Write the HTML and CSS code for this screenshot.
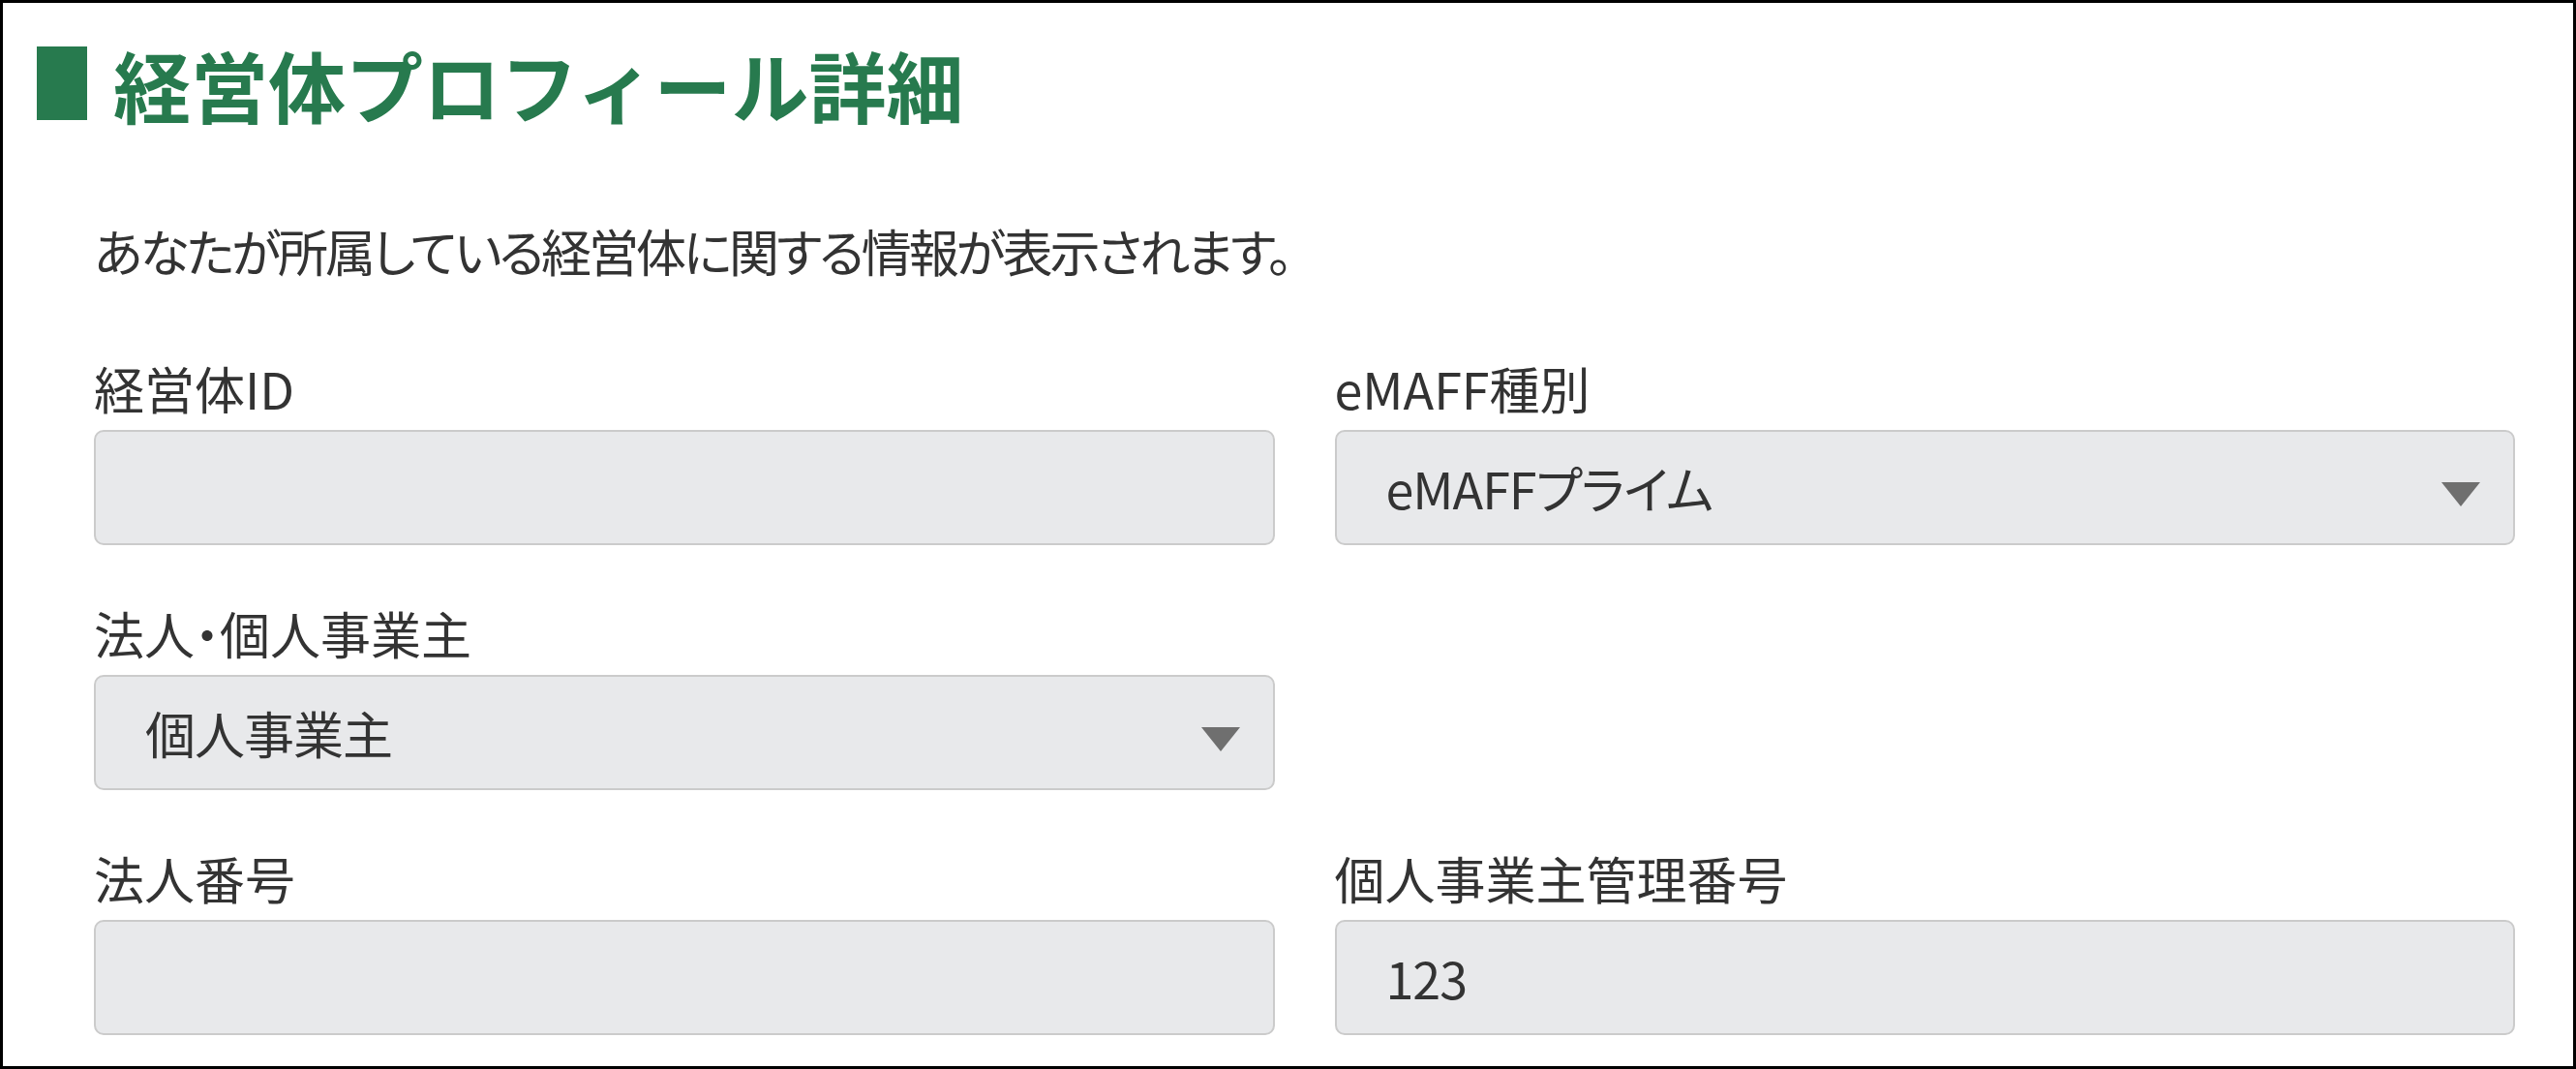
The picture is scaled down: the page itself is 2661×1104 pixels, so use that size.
FILE: index.html
```html
<!DOCTYPE html>
<html lang="ja">
<head>
    <meta charset="UTF-8">
    <meta name="viewport" content="width=device-width, initial-scale=1.0">
    <title>経営体プロフィール詳細</title>
    <link rel="stylesheet" href="styles.css">
</head>

<body>

    <section class="panel">

        <h1 class="page-title">経営体プロフィール詳細</h1>

        <div class="content">

            <p class="lead">あなたが所属している経営体に関する情報が表示されます。</p>

            <form class="form-grid">

                <div class="field">
                    <label for="org-id">経営体ID</label>
                    <input type="text" id="org-id" class="control" readonly>
                </div>

                <div class="field">
                    <label for="emaff-type">eMAFF種別</label>
                    <div class="select-wrap">
                        <select id="emaff-type" class="control">
                            <option>eMAFFプライム</option>
                        </select>
                        <svg class="select-arrow" viewBox="0 0 40 25"><polygon points="0,0 40,0 20,25"/></svg>
                    </div>
                </div>

                <div class="field">
                    <label for="org-kind">法人・個人事業主</label>
                    <div class="select-wrap">
                        <select id="org-kind" class="control">
                            <option>個人事業主</option>
                        </select>
                        <svg class="select-arrow" viewBox="0 0 40 25"><polygon points="0,0 40,0 20,25"/></svg>
                    </div>
                </div>

                <div class="field"></div>

                <div class="field">
                    <label for="corp-no">法人番号</label>
                    <input type="text" id="corp-no" class="control" readonly>
                </div>

                <div class="field">
                    <label for="sole-no">個人事業主管理番号</label>
                    <input type="text" id="sole-no" class="control" value="123" readonly>
                </div>

            </form>

        </div>

    </section>

</body>
</html>
```

FILE: styles.css
```css
* {
    box-sizing: border-box;
}

:root {
    --green: #277a4e;
    --text: #333333;
    --field-bg: #e8e9eb;
    --field-border: #cbcbcb;
    --arrow: #6f6f6f;
}

body {
    margin: 0;
    background: #ffffff;
    color: var(--text);
    font-family: "Noto Sans CJK JP", "Noto Sans", sans-serif;
}

.panel {
    height: 1104px;
    border: 3px solid #000000;
    padding: 45px 0 0 35px;
    overflow: hidden;
}

.page-title {
    display: flex;
    align-items: center;
    gap: 27px;
    margin: 0;
    height: 76px;
    line-height: 76px;
    font-size: 80px;
    font-weight: 700;
    color: var(--green);
}

.page-title::before {
    content: "";
    width: 52px;
    height: 76px;
    background: var(--green);
}

.content {
    padding: 104px 60px 0 59px;
    font-size: 52px;
    font-feature-settings: "palt";
}

.lead {
    margin: 0;
    line-height: 62px;
    letter-spacing: -3px;
}

.form-grid {
    display: grid;
    grid-template-columns: 1fr 1fr;
    column-gap: 62px;
    row-gap: 60px;
    margin-top: 80px;
}

.field > label {
    display: block;
    line-height: 62px;
    margin-bottom: 12px;
}

.control {
    display: block;
    width: 100%;
    height: 119px;
    margin: 0;
    padding: 0 0 0 51px;
    border: 2px solid var(--field-border);
    border-radius: 10px;
    background: var(--field-bg);
    color: var(--text);
    font: inherit;
    font-feature-settings: "palt";
    letter-spacing: -1px;
    appearance: none;
    outline: 0;
}

.select-wrap {
    position: relative;
}

.select-arrow {
    position: absolute;
    right: 36px;
    top: 54px;
    width: 40px;
    height: 25px;
    fill: var(--arrow);
    pointer-events: none;
}
```
